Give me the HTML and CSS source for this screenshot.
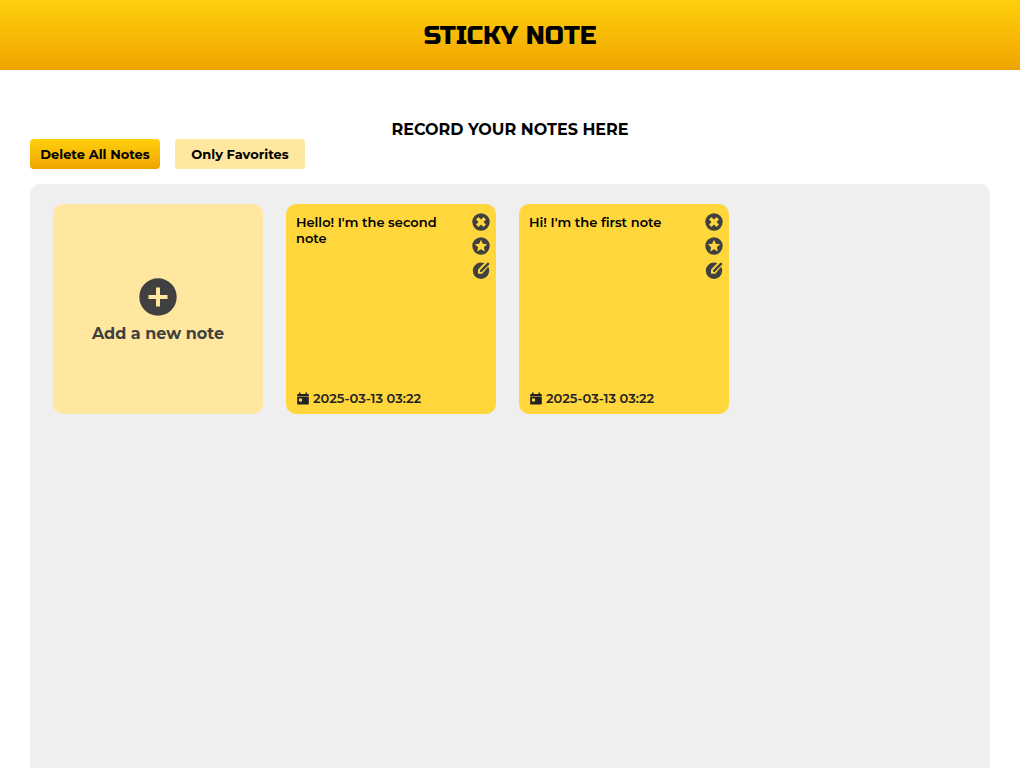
FILE: index.html
```html
<!DOCTYPE html>
<html lang="en">
<head>
<meta charset="utf-8">
<meta name="viewport" content="width=device-width, initial-scale=1">
<title>Sticky Note</title>
<link rel="stylesheet" href="styles.css">
</head>
<body>
<svg class="sprite" aria-hidden="true">
  <symbol id="close" viewBox="0 0 18 18"><path fill-rule="evenodd" d="M9 .3a8.700 8.700 0 1 0 0 17.400A8.700 8.700 0 0 0 9 .3ZM6.500 4 9 6.500 11.500 4 14 6.500 11.500 9l2.500 2.500-2.500 2.500L9 11.500 6.500 14 4 11.500 6.500 9 4 6.500Z"/></symbol>
  <symbol id="star" viewBox="0 0 18 18"><path fill-rule="evenodd" d="M9 .3a8.700 8.700 0 1 0 0 17.400A8.700 8.700 0 0 0 9 .3ZM9 2.800l1.800 4 4.300.5-3.200 2.900.9 4.300L9 12.300l-3.800 2.200.9-4.300-3.200-2.900 4.300-.5Z"/></symbol>
  <symbol id="edit" viewBox="0 0 18 18"><circle cx="9" cy="9.800" r="8.200"/><path fill="#ffd63c" d="M6 12.800V8.400L14.400 0H18v3.500l-7.700 9.300Z"/><path d="M8 10.900V9.200l7.400-7.400a.8.8 0 0 1 1.100 0l.6.6a.8.8 0 0 1 0 1.100l-7.400 7.400Z"/></symbol>
  <symbol id="calendar" viewBox="0 0 12 13"><path d="M2 .5h1.500V2h5V.5H10V2h.8c.6 0 1 .4 1 1v1H.2V3c0-.6.4-1 1-1H2Z"/><path fill-rule="evenodd" d="M.2 4.500h11.600v7c0 .6-.4 1-1 1H1.200c-.6 0-1-.4-1-1ZM2 6.500v3h3v-3Z"/></symbol>
</svg>
<header class="header"><h1 class="title">STICKY NOTE</h1></header>
<main class="main">
  <h2 class="subtitle">RECORD YOUR NOTES HERE</h2>
  <div class="toolbar">
    <button class="button button-primary" type="button">Delete All Notes</button>
    <button class="button" type="button">Only Favorites</button>
  </div>
  <section class="board" aria-label="Notes">
    <button class="card add" type="button">
      <svg class="add-icon" viewBox="0 0 38 38" aria-hidden="true"><path fill-rule="evenodd" d="M19 .3a18.700 18.700 0 1 0 0 37.400A18.700 18.700 0 0 0 19 .3ZM17 9.500h4V17h7.500v4H21v7.500h-4V21H9.500v-4H17Z"/></svg>
      <span>Add a new note</span>
    </button>
    <article class="card note">
      <div class="note-body">
        <p class="note-text">Hello! I'm the second note</p>
        <div class="actions">
          <button class="action" type="button" aria-label="Delete note"><svg class="icon"><use href="#close"/></svg></button>
          <button class="action" type="button" aria-label="Favorite note"><svg class="icon"><use href="#star"/></svg></button>
          <button class="action" type="button" aria-label="Edit note"><svg class="icon"><use href="#edit"/></svg></button>
        </div>
      </div>
      <div class="date"><svg class="calendar"><use href="#calendar"/></svg><time datetime="2025-03-13T03:22">2025-03-13 03:22</time></div>
    </article>
    <article class="card note">
      <div class="note-body">
        <p class="note-text">Hi! I'm the first note</p>
        <div class="actions">
          <button class="action" type="button" aria-label="Delete note"><svg class="icon"><use href="#close"/></svg></button>
          <button class="action" type="button" aria-label="Favorite note"><svg class="icon"><use href="#star"/></svg></button>
          <button class="action" type="button" aria-label="Edit note"><svg class="icon"><use href="#edit"/></svg></button>
        </div>
      </div>
      <div class="date"><svg class="calendar"><use href="#calendar"/></svg><time datetime="2025-03-13T03:22">2025-03-13 03:22</time></div>
    </article>
  </section>
</main>
</body>
</html>
```
FILE: styles.css
```css
* { box-sizing: border-box; }
body {
  margin: 0;
  min-height: 100vh;
  display: flex;
  flex-direction: column;
  background: #fff;
  color: #000;
  font-family: Montserrat, Inter, sans-serif;
}
h1, h2, p { margin: 0; }
button { border: 0; padding: 0; font: inherit; color: inherit; background: none; cursor: pointer; }
.sprite { display: none; }
.header {
  display: flex;
  justify-content: center;
  padding: 21px 20px 19px;
  background: linear-gradient(#ffd00d, #f0a400);
}
.title {
  font-family: "Russo One", Inter, sans-serif;
  font-size: 26px;
  line-height: 30px;
  font-weight: 400;
}
.main { flex: 1; display: flex; flex-direction: column; padding: 50px 30px 0; }
.subtitle { font-size: 16px; line-height: 19px; font-weight: 700; text-align: center; }
.toolbar { display: flex; gap: 15px; margin-bottom: 15px; }
.button {
  width: 130px;
  height: 30px;
  border-radius: 4px;
  background: #ffe79f;
  font-size: 13px;
  font-weight: 700;
}
.button-primary { background: linear-gradient(#ffd00d, #f0a400); }
.board {
  flex: 1;
  display: grid;
  grid-template-columns: repeat(auto-fill, 210px);
  align-content: start;
  gap: 23px;
  padding: 20px 23px;
  border-radius: 10px 10px 0 0;
  background: #efefef;
}
.card { min-height: 210px; border-radius: 10px; display: flex; flex-direction: column; }
.add {
  align-items: center;
  justify-content: center;
  gap: 8px;
  padding-top: 4px;
  background: #ffe79f;
  color: #404040;
  font-size: 16px;
  line-height: 20px;
  font-weight: 700;
}
.add-icon { width: 38px; height: 38px; fill: #404040; }
.note {
  justify-content: space-between;
  padding: 9px 6px 8px 10px;
  background: #ffd63c;
  font-size: 13px;
  line-height: 16px;
  font-weight: 600;
}
.note-body { display: flex; justify-content: space-between; gap: 20px; }
.note-text { flex: 1; padding-top: 1px; }
.actions { display: flex; flex-direction: column; gap: 6px; }
.action { display: flex; }
.icon { width: 18px; height: 18px; fill: #404040; }
.date { display: flex; align-items: center; gap: 4px; padding-left: 1px; color: #222; }
.calendar { width: 12px; height: 13px; fill: #222; }
```
